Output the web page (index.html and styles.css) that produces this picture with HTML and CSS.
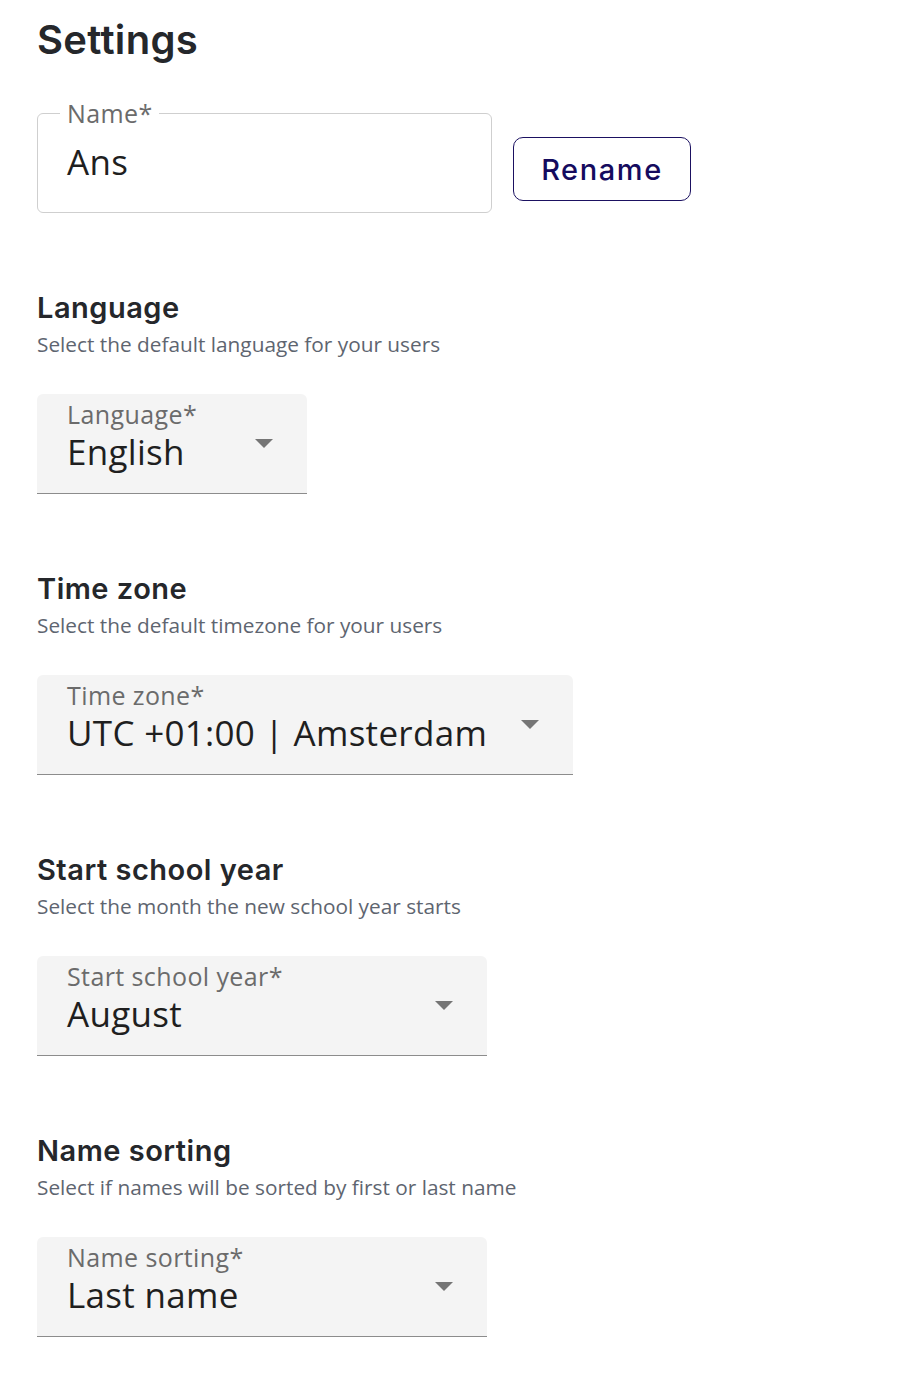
FILE: index.html
```html
<!DOCTYPE html>
<html lang="en">
<head>
<meta charset="utf-8">
<title>Settings</title>
<link rel="stylesheet" href="styles.css">
</head>
<body>
<main class="page">
  <h1 class="page-title">Settings</h1>

  <div class="name-row">
    <fieldset class="outlined-field">
      <legend class="outlined-label">Name*</legend>
      <div class="field-value">Ans</div>
    </fieldset>
    <button class="rename-btn" type="button">Rename</button>
  </div>

  <section class="setting">
    <h2 class="setting-title">Language</h2>
    <p class="setting-desc">Select the default language for your users</p>
    <div class="select-field w-language">
      <div class="select-text">
        <span class="select-label">Language*</span>
        <span class="field-value">English</span>
      </div>
      <svg class="select-arrow" viewBox="0 0 18 9" aria-hidden="true"><path d="M0 0 L18 0 L9 9 Z"/></svg>
    </div>
  </section>

  <section class="setting">
    <h2 class="setting-title">Time zone</h2>
    <p class="setting-desc">Select the default timezone for your users</p>
    <div class="select-field w-timezone">
      <div class="select-text">
        <span class="select-label">Time zone*</span>
        <span class="field-value">UTC +01:00 | Amsterdam</span>
      </div>
      <svg class="select-arrow" viewBox="0 0 18 9" aria-hidden="true"><path d="M0 0 L18 0 L9 9 Z"/></svg>
    </div>
  </section>

  <section class="setting">
    <h2 class="setting-title">Start school year</h2>
    <p class="setting-desc">Select the month the new school year starts</p>
    <div class="select-field w-medium">
      <div class="select-text">
        <span class="select-label">Start school year*</span>
        <span class="field-value">August</span>
      </div>
      <svg class="select-arrow" viewBox="0 0 18 9" aria-hidden="true"><path d="M0 0 L18 0 L9 9 Z"/></svg>
    </div>
  </section>

  <section class="setting">
    <h2 class="setting-title">Name sorting</h2>
    <p class="setting-desc">Select if names will be sorted by first or last name</p>
    <div class="select-field w-medium">
      <div class="select-text">
        <span class="select-label">Name sorting*</span>
        <span class="field-value">Last name</span>
      </div>
      <svg class="select-arrow" viewBox="0 0 18 9" aria-hidden="true"><path d="M0 0 L18 0 L9 9 Z"/></svg>
    </div>
  </section>
</main>
</body>
</html>
```

FILE: styles.css
```css
* { box-sizing: border-box; }

html, body {
  margin: 0;
  background: #ffffff;
}

.page {
  padding: 16px 0 40px 37px;
  font-family: "Open Sans", "Liberation Sans", sans-serif;
  color: #1f1f1f;
}

.page-title {
  margin: 0;
  font-family: Inter, "Liberation Sans", sans-serif;
  font-weight: 600;
  font-size: 40px;
  line-height: 48px;
  letter-spacing: 0.3px;
  color: #25272b;
}

.name-row {
  display: flex;
  align-items: flex-start;
  gap: 21px;
  margin-top: 37px;
}

.outlined-field {
  width: 455px;
  height: 112px;
  margin: 0;
  padding: 0 0 0 22px;
  border: 1px solid #cfcfcf;
  border-radius: 6px;
}

.outlined-label {
  padding: 0 6px 0 7px;
  font-size: 25px;
  line-height: 24px;
  letter-spacing: 0.4px;
  color: #6b6b6b;
}

.outlined-field .field-value {
  padding-left: 7px;
  margin-top: 14px;
}

.rename-btn {
  margin-top: 36px;
  width: 178px;
  height: 64px;
  border: 1px solid #1b1161;
  border-radius: 10px;
  background: #ffffff;
  color: #150b5e;
  font-family: Inter, "Liberation Sans", sans-serif;
  font-weight: 500;
  font-size: 29px;
  letter-spacing: 1.6px;
  padding: 0;
}

.setting {
  margin-top: 78px;
}

.setting-title {
  margin: 0;
  font-family: Inter, "Liberation Sans", sans-serif;
  font-weight: 600;
  font-size: 29px;
  line-height: 34px;
  letter-spacing: 0.5px;
  color: #25272b;
}

.setting-desc {
  margin: 6px 0 0;
  font-size: 20.8px;
  line-height: 26px;
  color: #5e6570;
}

.select-field {
  display: flex;
  align-items: center;
  height: 100px;
  margin-top: 37px;
  padding: 0 34px 0 30px;
  background: #f4f4f4;
  border-bottom: 1px solid #8c8c8c;
  border-radius: 6px 6px 0 0;
}

.w-language { width: 270px; }
.w-timezone { width: 536px; }
.w-medium { width: 450px; }

.select-text {
  flex: 1;
  display: flex;
  flex-direction: column;
  align-self: flex-start;
  padding-top: 5px;
}

.select-label {
  font-size: 25px;
  line-height: 30px;
  letter-spacing: 0.4px;
  color: #6b6b6b;
}

.field-value {
  font-size: 35px;
  line-height: 46px;
  letter-spacing: 0.3px;
  color: #1f1f1f;
}

.select-arrow {
  width: 18px;
  height: 9px;
  fill: #757575;
  flex: none;
}
```
